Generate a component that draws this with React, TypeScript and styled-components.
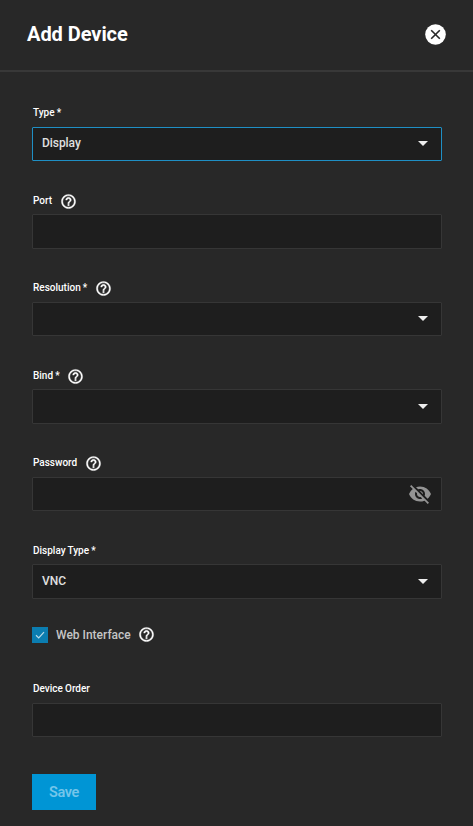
import React from 'react';
import styled, { createGlobalStyle } from 'styled-components';
import { MdHelpOutline, MdVisibilityOff } from 'react-icons/md';

const GlobalStyle = createGlobalStyle`
  * { box-sizing: border-box; }
  body { margin: 0; background: #282828; color: #fff; font-family: Roboto, "Liberation Sans", sans-serif; }
`;

const Panel = styled.main`
  width: 100%;
  height: 826px;
  overflow: hidden;
  background: #282828;
`;

const Header = styled.header`
  display: flex;
  align-items: center;
  justify-content: space-between;
  height: 72px;
  padding: 0 27.5px 2px 27px;
  border-bottom: 2px solid #383838;
`;

const Title = styled.h1`
  margin: 0;
  font-size: 20px;
  line-height: 24px;
  font-weight: 700;
  letter-spacing: -0.05px;
  white-space: nowrap;
`;

const CloseButton = styled.button`
  display: flex;
  padding: 0;
  border: 0;
  background: none;
`;

const Form = styled.form`
  padding: 29.6px 31.5px 0 32px;
`;

const Field = styled.div<{ $height?: number }>`
  height: ${(p) => p.$height ?? 87.5}px;
`;

const LabelRow = styled.div`
  display: flex;
  align-items: center;
  gap: 8px;
  height: 25px;
  padding-left: 1px;
`;

const Label = styled.label`
  font-size: 10px;
  line-height: 12px;
  font-weight: 500;
  word-spacing: -0.4px;
  margin-top: -1.6px;
  white-space: nowrap;
`;

const HelpIcon = styled(MdHelpOutline)`
  display: block;
  width: 17px;
  height: 17px;
  margin-top: -1px;
  margin-left: -0.4px;
  color: #fff;

  path:last-child {
    stroke: #fff;
    stroke-width: 0.5px;
  }
`;

const Control = styled.div<{ $focused?: boolean }>`
  display: flex;
  align-items: center;
  justify-content: space-between;
  height: 34.5px;
  padding: 0 8.5px 1.2px 9px;
  border: 1px solid ${(p) => (p.$focused ? '#1f8fc4' : '#363636')};
  border-radius: 1px;
  background: #1e1e1e;
  font-size: 12px;
  font-weight: 500;
  letter-spacing: -0.05px;
  color: #e0e0e0;
`;

const Caret = styled.span`
  margin: 1px 4.5px 0 0;
  border: 5px solid transparent;
  border-top-color: #eee;
  border-bottom: 0;
`;

const HiddenIcon = styled(MdVisibilityOff)`
  width: 24px;
  height: 24px;
  margin-top: 1px;
  color: #949494;
`;

const CheckRow = styled.div`
  display: flex;
  align-items: center;
  height: 18px;
  margin-bottom: 34px;
`;

const CheckBox = styled.span`
  display: flex;
  width: 16px;
  height: 16px;
  background: #0b7db0;
`;

const CheckLabel = styled.span`
  margin: 0 7.4px 0 8px;
  font-size: 12px;
  font-weight: 500;
  color: #c5c5c5;
`;

const SaveButton = styled.button`
  width: 64px;
  height: 36px;
  padding: 1px 0 0;
  border: 0;
  background: #0095d5;
  color: #74c5ea;
  font: 600 14.5px/35px Roboto, sans-serif;
  letter-spacing: -0.4px;
`;

type Item = { label: string; help?: boolean; value?: string; kind?: 'select' | 'password'; focused?: boolean; height?: number };

const items: Item[] = [
  { label: 'Type *', value: 'Display', kind: 'select', focused: true },
  { label: 'Port', help: true },
  { label: 'Resolution *', help: true, kind: 'select' },
  { label: 'Bind *', help: true, kind: 'select' },
  { label: 'Password', help: true, kind: 'password' },
  { label: 'Display Type *', value: 'VNC', kind: 'select', height: 86.5 },
];

function FormField({ label, help, value, kind, focused, height }: Item) {
  return (
    <Field $height={height}>
      <LabelRow>
        <Label>{label}</Label>
        {help && <HelpIcon />}
      </LabelRow>
      <Control $focused={focused}>
        <span>{value}</span>
        {kind === 'select' && <Caret />}
        {kind === 'password' && <HiddenIcon />}
      </Control>
    </Field>
  );
}

export default function App() {
  return (
    <Panel>
      <GlobalStyle />
      <Header>
        <Title>Add Device</Title>
        <CloseButton aria-label="Close">
          <svg width="21" height="21" viewBox="0 0 21 21">
            <circle cx="10.5" cy="10.5" r="10.3" fill="#fff" />
            <path d="M6.2 6.2l8.6 8.6M14.8 6.2l-8.6 8.6" stroke="#282828" strokeWidth="1.6" />
          </svg>
        </CloseButton>
      </Header>
      <Form>
        {items.map((item) => <FormField key={item.label} {...item} />)}
        <CheckRow>
          <CheckBox>
            <svg width="16" height="16" viewBox="0 0 16 16">
              <path d="M4 8.3l2.7 2.6L12 5.2" fill="none" stroke="#b9dcea" strokeWidth="1.2" />
            </svg>
          </CheckBox>
          <CheckLabel>Web Interface</CheckLabel>
          <HelpIcon />
        </CheckRow>
        <FormField label="Device Order" height={96} />
        <SaveButton type="button">Save</SaveButton>
      </Form>
    </Panel>
  );
}
